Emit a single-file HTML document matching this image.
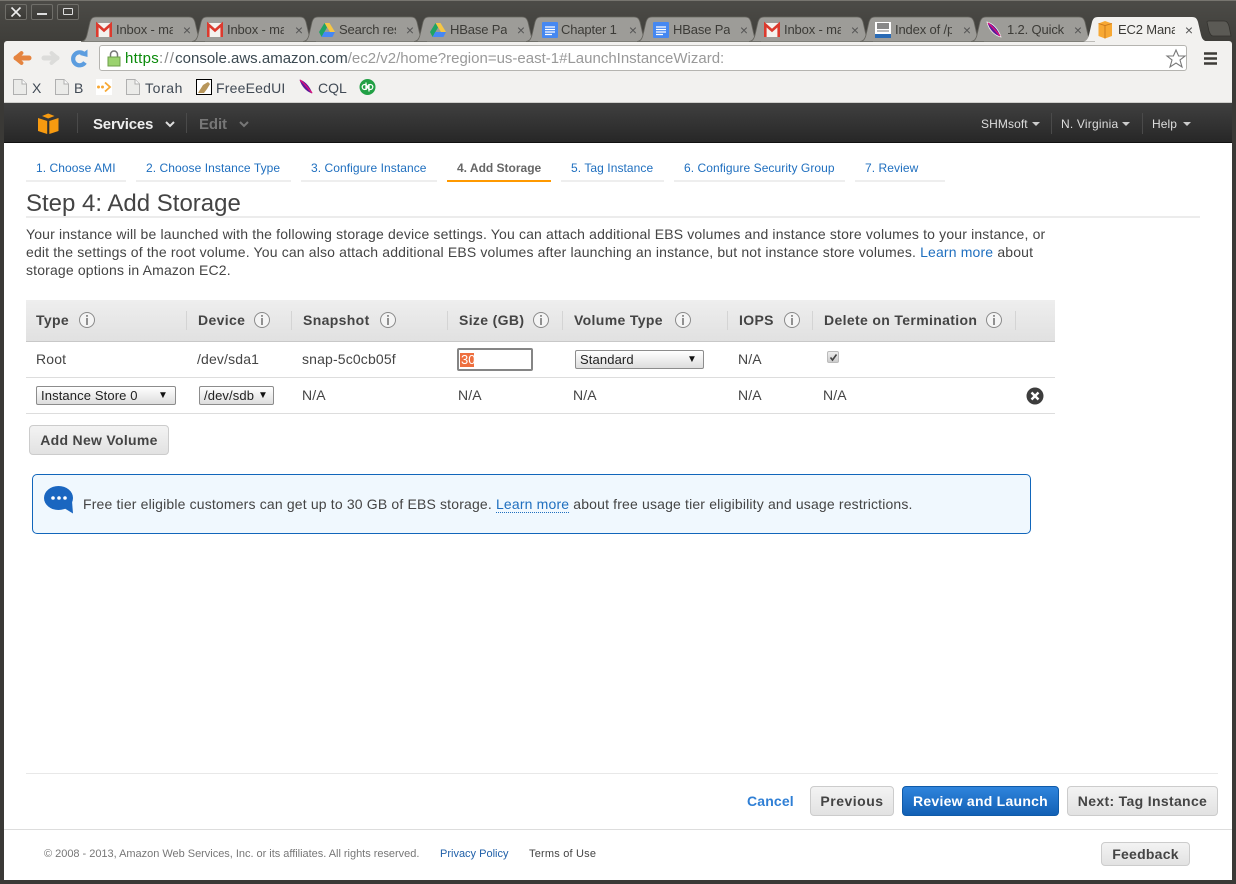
<!DOCTYPE html>
<html><head><meta charset="utf-8"><title>EC2 Management Console</title>
<style>
html,body{margin:0;padding:0}
body{width:1236px;height:884px;position:relative;overflow:hidden;background:#3a3936;font-family:"Liberation Sans",sans-serif;color:#444}
.a{position:absolute;white-space:nowrap}
svg{position:absolute;overflow:visible}
.tt{position:absolute;top:21px;height:18px;line-height:18px;font-size:13px;color:#3c3b37;overflow:hidden;white-space:nowrap;width:57px;letter-spacing:-.15px}
.tc{position:absolute;top:21px;font-size:14px;line-height:18px;color:#555;width:12px;text-align:center}
.wb{position:absolute;top:4px;width:20px;height:14px;border:1px solid #6f6e69;border-radius:2px;background:linear-gradient(#4a4945,#3b3a36);color:#eee;text-align:center;line-height:14px;font-size:13px}
.bm{position:absolute;top:79px;font-size:14px;line-height:18px;color:#414a55;letter-spacing:.3px}
.st{position:absolute;top:145px;height:35px;box-sizing:content-box;border-bottom:2px solid #eee;font-size:12px;line-height:46px;text-align:left;text-indent:10px;color:#1f6fbf;letter-spacing:.07px}
.th{position:absolute;top:311px;font-size:14px;font-weight:bold;line-height:18px;color:#444;letter-spacing:.35px}
.sp{position:absolute;top:311px;width:1px;height:19px;background:#d4d4d4}
.td{position:absolute;font-size:14px;line-height:18px;color:#444;letter-spacing:.15px}
.sel{position:absolute;height:17px;border:1px solid #8c8c8c;border-radius:2px;background:linear-gradient(#fff,#ddd);font-size:13px;line-height:17px;color:#222;padding-left:4px;box-sizing:content-box;letter-spacing:.12px}
.sel i{position:absolute;right:6px;top:0;font-style:normal;font-size:10px;color:#111}
.btn{position:absolute;box-sizing:border-box;border:1px solid #ccc;border-radius:4px;background:linear-gradient(#f3f3f3,#e2e2e2);font-weight:bold;font-size:14px;color:#444;text-align:center;letter-spacing:.3px}
.hd{position:absolute;top:116px;line-height:16px;font-size:12px;color:#ddd;letter-spacing:.1px}
.ft{position:absolute;top:847px;line-height:14px;font-size:11px}
</style></head>
<body>
<svg width="0" height="0"><defs>
<linearGradient id="og" x1="0" y1="0" x2="0" y2="1"><stop offset="0" stop-color="#eda878"/><stop offset="1" stop-color="#dc6426"/></linearGradient>
<symbol id="t" viewBox="0 0 126 26" width="126" height="26" overflow="visible"><path d="M0 24.500C3 24.500 5 22 6 18L9 5C10 2 11 0 15 0H108C112 0 113 2 114 5L117 18C118 22 120 24.500 124 24.500Z" fill="#9d9c98" stroke="#66655f" stroke-width=".8"/></symbol>
<symbol id="page" viewBox="0 0 14 16" width="14" height="16" overflow="visible"><path d="M.5.5H9L13.500 5V15.500H.5Z" fill="#ebebe9" stroke="#b0b0b0"/><path d="M9 .5V5H13.500" fill="#fafafa" stroke="#b0b0b0"/></symbol>
<symbol id="gm" viewBox="0 0 16 14" width="16" height="14" overflow="visible"><rect width="16" height="14" fill="#f4f2ee"/><path d="M1.300 14V1.500L8 7.500L14.700 1.500V14" fill="none" stroke="#dc3a2e" stroke-width="2.600"/></symbol>
<symbol id="dr" viewBox="0 0 16 14" width="16" height="14" overflow="visible"><path d="M5.500 0H10.500L16 9H11Z" fill="#f6c644"/><path d="M5.500 0L0 9L2.600 14L8 4.500Z" fill="#1fa463"/><path d="M2.600 14H13.400L16 9H5.200Z" fill="#4687f4"/></symbol>
<symbol id="dc" viewBox="0 0 16 16" width="16" height="16" overflow="visible"><rect width="16" height="16" rx="1" fill="#4688f1"/><path d="M3 5H13M3 7.500H13M3 10H13M3 12.500H10" stroke="#fff" stroke-width="1.200"/></symbol>
<symbol id="fe" viewBox="0 0 16 16" width="16" height="16" overflow="visible"><path d="M1 0C6 1 12 6 15 15C10 14 3 9 1 0Z" fill="#5a1a9a" stroke="#f4f2ee" stroke-width=".8"/><path d="M2 1C6 4 10 9 14 14" stroke="#e0107a" stroke-width="1.400" fill="none"/></symbol>
<symbol id="ii" viewBox="0 0 18 18" width="18" height="18" overflow="visible"><circle cx="9" cy="9" r="7.500" fill="#f4f4f4" stroke="#8a8a8a" stroke-width="1"/><rect x="8.300" y="4" width="1.400" height="1.800" fill="#666"/><rect x="8.300" y="7" width="1.400" height="7" fill="#666"/></symbol>
</defs></svg>

<!-- window top -->
<div class="a" style="left:0;top:0;width:1236px;height:103px;background:linear-gradient(#4c4b47 0,#3f3e3a 40px,#3a3936 100%);border-top:1px solid #77756f;box-sizing:border-box"></div>
<div class="wb" style="left:5px"><svg style="left:5px;top:2px" width="10" height="10"><path d="M.5.5L9.500 9.500M9.500.5L.5 9.500" stroke="#eee" stroke-width="1.600"/></svg></div>
<div class="wb" style="left:31px"><span style="display:block;width:10px;height:2px;background:#ddd;margin:8px auto 0"></span></div>
<div class="wb" style="left:57px"><span style="display:block;width:8px;height:5px;border:1px solid #ddd;border-radius:1px;margin:3px auto 0"></span></div>

<!-- toolbar -->
<div class="a" style="left:4px;top:41px;width:1228px;height:62px;background:#f2f1ef;border-bottom:1px solid #cfcecb;box-sizing:border-box;border-radius:3px 3px 0 0"></div>

<!-- tabs -->
<svg style="left:0;top:0" width="1236" height="48">
<use href="#t" x="81" y="17"/><use href="#t" x="192" y="17"/><use href="#t" x="303" y="17"/><use href="#t" x="414" y="17"/><use href="#t" x="526" y="17"/><use href="#t" x="637" y="17"/><use href="#t" x="749" y="17"/><use href="#t" x="860" y="17"/><use href="#t" x="971" y="17"/>
<path d="M1083 41.500C1086 41.500 1088 39 1089 35L1092 22C1093 19 1094 17 1098 17H1192C1196 17 1197 19 1198 22L1201 35C1202 39 1204 41.500 1208 41.500Z" fill="#f2f1ef"/>
<path d="M1207 22C1207 21 1208 21 1209 21H1224C1227 21 1228 23 1229 26L1231 36H1213C1211 36 1210 34 1209 31Z" fill="#5b5a55" stroke="#33322e" stroke-width=".8"/>
<use href="#gm" x="96" y="23"/><use href="#gm" x="207" y="23"/>
<use href="#dr" x="319" y="23"/><use href="#dr" x="430" y="23"/>
<use href="#dc" x="542" y="22"/><use href="#dc" x="653" y="22"/>
<use href="#gm" x="764" y="23"/>
<g><rect x="875" y="22" width="16" height="16" fill="#fff"/><rect x="875" y="34" width="16" height="4" fill="#2a6bb5"/><rect x="877" y="23" width="12" height="6" fill="#888"/><rect x="877" y="30" width="12" height="2" fill="#bbb"/></g>
<use href="#fe" x="986" y="22"/>
<path d="M1098.500 23.500L1105 21L1112 23.500V36L1105 38.500L1098.500 36Z" fill="#f7a833"/><path d="M1098.500 23.500L1105 25.500L1112 23.500M1105 25.500V38.500" fill="none" stroke="#c8761a" stroke-width=".9"/>
</svg>
<div class="tt" style="left:116px">Inbox - ma</div><div class="tc" style="left:181px">×</div>
<div class="tt" style="left:227px">Inbox - mai</div><div class="tc" style="left:293px">×</div>
<div class="tt" style="left:339px">Search res</div><div class="tc" style="left:404px">×</div>
<div class="tt" style="left:450px">HBase Pac</div><div class="tc" style="left:515px">×</div>
<div class="tt" style="left:561px">Chapter 1.</div><div class="tc" style="left:627px">×</div>
<div class="tt" style="left:673px">HBase Pac</div><div class="tc" style="left:738px">×</div>
<div class="tt" style="left:784px">Inbox - ma</div><div class="tc" style="left:849px">×</div>
<div class="tt" style="left:895px">Index of /p</div><div class="tc" style="left:961px">×</div>
<div class="tt" style="left:1007px">1.2. Quick</div><div class="tc" style="left:1072px">×</div>
<div class="tt" style="left:1118px">EC2 Manag</div><div class="tc" style="left:1183px">×</div>

<!-- nav -->
<svg style="left:0;top:44px" width="96" height="28">
<path d="M16 14H29" stroke="url(#og)" stroke-width="5" stroke-linecap="round" fill="none"/><path d="M16 14h13" stroke="#e5843f" stroke-width="5" stroke-linecap="round"/>
<path d="M21.500 9L15.500 14L21.500 19" fill="none" stroke="#e5843f" stroke-width="3.800" stroke-linecap="round" stroke-linejoin="round"/>
<path d="M44 14H57" stroke="#dcdcda" stroke-width="5" stroke-linecap="round"/>
<path d="M51.500 9L57.500 14L51.500 19" fill="none" stroke="#dcdcda" stroke-width="3.800" stroke-linecap="round" stroke-linejoin="round"/>
<path d="M84 10A6.500 6.500 0 1 0 85 18.500" fill="none" stroke="#5c9ddf" stroke-width="4.200"/><path d="M80 11L87.500 5.500V13Z" fill="#5c9ddf"/>
</svg>
<div class="a" style="left:99px;top:45px;width:1088px;height:26px;background:#fff;border:1px solid #b5b4b0;border-radius:3px;box-sizing:border-box"></div>
<svg style="left:107px;top:50px" width="14" height="16"><path d="M3.500 7V4.500a3.500 3.500 0 0 1 7 0V7" fill="none" stroke="#777" stroke-width="1.500"/><rect x="1" y="7" width="12" height="9" fill="#9bd26f" stroke="#6e9e48"/></svg>
<div class="a" style="left:125px;top:50px;font-size:15px;line-height:18px;color:#999"><span style="color:#0a8a0a;letter-spacing:.3px">https</span><span style="color:#888;letter-spacing:1.200px">://</span><span style="color:#3c4a52">console.aws.amazon.com</span>/ec2/v2/home?region=us-east-1#LaunchInstanceWizard:</div>
<svg style="left:1166px;top:49px" width="20" height="19"><path d="M10 1L12.600 7H19L14 11L16 18L10 14L4 18L6 11L1 7H7.400Z" fill="#fff" stroke="#777" stroke-width="1.100"/></svg>
<svg style="left:1204px;top:52px" width="13" height="13"><path d="M0 1.500H13M0 6.500H13M0 11.500H13" stroke="#3c3b37" stroke-width="2.400"/></svg>

<!-- bookmarks -->
<svg style="left:0;top:72px" width="400" height="30">
<use href="#page" x="13" y="7"/><use href="#page" x="55" y="7"/>
<rect x="96" y="7" width="16" height="16" fill="#fff"/><circle cx="98.500" cy="15" r="1.500" fill="#f7a833"/><circle cx="102.500" cy="15" r="1.500" fill="#f7a833"/><path d="M105 10.500L110 15L105 19.500" fill="none" stroke="#f7a833" stroke-width="1.800"/>
<use href="#page" x="126" y="7"/>
<rect x="196.500" y="7.500" width="15" height="15" fill="#fff" stroke="#000"/><path d="M198 21L203 13L208 10L210 12L207 17L204 21Z" fill="#b8965a"/>
<use href="#fe" x="298" y="7"/>
<circle cx="367.500" cy="15" r="8" fill="#22a045"/><path d="M366 10.500V18M369 12V19.500" stroke="#fff" stroke-width="1.300"/><circle cx="364.700" cy="15" r="2.500" fill="none" stroke="#fff" stroke-width="1.200"/><circle cx="370.300" cy="15" r="2.500" fill="none" stroke="#fff" stroke-width="1.200"/>
</svg>
<div class="bm" style="left:32px">X</div><div class="bm" style="left:74px">B</div><div class="bm" style="left:145px;letter-spacing:.6px">Torah</div><div class="bm" style="left:216px;letter-spacing:.2px">FreeEedUI</div><div class="bm" style="left:318px;letter-spacing:0">CQL</div>

<!-- aws header -->
<div class="a" style="left:4px;top:103px;width:1228px;height:40px;background:linear-gradient(#404040,#272727);border-bottom:1px solid #111;box-sizing:border-box"></div>
<svg style="left:38px;top:113px" width="21" height="21"><path d="M0 5L9.200 8V21L0 18Z" fill="#f79a10"/><path d="M20.500 5L11.300 8V21L20.500 18Z" fill="#f79a10"/><path d="M4 3L10.200 0.500L16.500 3L10.200 5.500Z" fill="#f79a10"/></svg>
<div class="a" style="left:77px;top:113px;width:1px;height:20px;background:#4a4a4a"></div>
<div class="a" style="left:186px;top:113px;width:1px;height:20px;background:#4a4a4a"></div>
<div class="a" style="left:93px;top:116px;font-size:15px;font-weight:bold;line-height:18px;color:#eee;letter-spacing:-.2px">Services</div>
<svg style="left:165px;top:121px" width="10" height="7"><path d="M1 1L5 5L9 1" fill="none" stroke="#ddd" stroke-width="2"/></svg>
<div class="a" style="left:199px;top:116px;font-size:15px;font-weight:bold;line-height:18px;color:#777;letter-spacing:-.1px">Edit</div>
<svg style="left:239px;top:121px" width="10" height="7"><path d="M1 1L5 5L9 1" fill="none" stroke="#777" stroke-width="2"/></svg>
<div class="hd" style="left:981px">SHMsoft</div><svg style="left:1032px;top:122px" width="8" height="5"><path d="M0 0H8L4 4Z" fill="#ccc"/></svg>
<div class="a" style="left:1051px;top:113px;width:1px;height:21px;background:#4a4a4a"></div>
<div class="hd" style="left:1061px;letter-spacing:.2px">N. Virginia</div><svg style="left:1122px;top:122px" width="8" height="5"><path d="M0 0H8L4 4Z" fill="#ccc"/></svg>
<div class="a" style="left:1142px;top:113px;width:1px;height:21px;background:#4a4a4a"></div>
<div class="hd" style="left:1152px">Help</div><svg style="left:1183px;top:122px" width="8" height="5"><path d="M0 0H8L4 4Z" fill="#ccc"/></svg>

<!-- page -->
<div class="a" style="left:4px;top:143px;width:1228px;height:737px;background:#fff"></div>
<div class="st" style="left:26px;width:100px">1. Choose AMI</div>
<div class="st" style="left:136px;width:155px">2. Choose Instance Type</div>
<div class="st" style="left:301px;width:136px">3. Configure Instance</div>
<div class="st" style="left:447px;width:104px;font-weight:bold;color:#666;border-bottom-color:#f90;letter-spacing:0">4. Add Storage</div>
<div class="st" style="left:561px;width:103px">5. Tag Instance</div>
<div class="st" style="left:674px;width:171px">6. Configure Security Group</div>
<div class="st" style="left:855px;width:90px">7. Review</div>

<div class="a" style="left:26px;top:190px;font-size:24px;line-height:28px;color:#444">Step 4: Add Storage</div>
<div class="a" style="left:26px;top:216px;width:1174px;height:2px;background:#ececec"></div>
<div class="a" style="left:26px;top:225px;font-size:14px;line-height:18px;color:#444;letter-spacing:.158px">Your instance will be launched with the following storage device settings. You can attach additional EBS volumes and instance store volumes to your instance, or<br>edit the settings of the root volume. You can also attach additional EBS volumes after launching an instance, but not instance store volumes. <span style="color:#1f6fbf">Learn more</span> about<br>storage options in Amazon EC2.</div>

<!-- table -->
<div class="a" style="left:26px;top:300px;width:1029px;height:42px;background:linear-gradient(#eee,#e1e1e1);border-bottom:1px solid #c8c8c8;box-sizing:border-box"></div>
<div class="a" style="left:26px;top:377px;width:1029px;height:1px;background:#ddd"></div>
<div class="a" style="left:26px;top:413px;width:1029px;height:1px;background:#ddd"></div>
<div class="sp" style="left:186px"></div><div class="sp" style="left:291px"></div><div class="sp" style="left:447px"></div><div class="sp" style="left:562px"></div><div class="sp" style="left:727px"></div><div class="sp" style="left:812px"></div><div class="sp" style="left:1015px"></div>
<div class="th" style="left:36px">Type</div><div class="th" style="left:198px">Device</div><div class="th" style="left:303px">Snapshot</div><div class="th" style="left:459px">Size (GB)</div><div class="th" style="left:574px">Volume Type</div><div class="th" style="left:739px">IOPS</div><div class="th" style="left:824px">Delete on Termination</div>
<svg style="left:0;top:311px" width="1060" height="18">
<use href="#ii" x="78" y="0"/><use href="#ii" x="253" y="0"/><use href="#ii" x="379" y="0"/><use href="#ii" x="532" y="0"/><use href="#ii" x="674" y="0"/><use href="#ii" x="783" y="0"/><use href="#ii" x="985" y="0"/>
</svg>
<div class="td" style="left:36px;top:350px">Root</div>
<div class="td" style="left:197px;top:350px">/dev/sda1</div>
<div class="td" style="left:302px;top:350px">snap-5c0cb05f</div>
<div class="a" style="left:457px;top:348px;width:76px;height:23px;box-sizing:border-box;border:2px solid #858585;border-radius:2px;background:#fff"><span class="a" style="left:1px;top:3px;height:14px;line-height:14px;padding:0 0 0 1px;width:13px;background:#ee6f3f;color:#fff;font-size:13px">30</span></div>
<div class="sel" style="left:575px;top:350px;width:123px">Standard<i>▼</i></div>
<div class="td" style="left:738px;top:350px">N/A</div>
<div class="a" style="left:827px;top:351px;width:12px;height:12px;box-sizing:border-box;border:1px solid #bbb;border-radius:2px;background:linear-gradient(#eee,#ccc)"><svg style="left:1px;top:1px" width="9" height="9"><path d="M1.500 4.500L3.500 7L7.500 1.500" fill="none" stroke="#444" stroke-width="1.600"/></svg></div>
<div class="sel" style="left:36px;top:386px;width:134px">Instance Store 0<i style="right:7px">▼</i></div>
<div class="sel" style="left:199px;top:386px;width:69px">/dev/sdb<i style="right:5px">▼</i></div>
<div class="td" style="left:302px;top:386px">N/A</div><div class="td" style="left:458px;top:386px">N/A</div><div class="td" style="left:573px;top:386px">N/A</div><div class="td" style="left:738px;top:386px">N/A</div><div class="td" style="left:823px;top:386px">N/A</div>
<svg style="left:1026px;top:387px" width="18" height="18"><circle cx="9" cy="9" r="8.500" fill="#3d3d3d"/><path d="M5.500 5.500L12.500 12.500M12.500 5.500L5.500 12.500" stroke="#fff" stroke-width="2.400"/></svg>
<div class="btn" style="left:29px;top:425px;width:140px;height:30px;line-height:28px">Add New Volume</div>

<!-- info -->
<div class="a" style="left:32px;top:474px;width:999px;height:60px;box-sizing:border-box;background:#f0f8fe;border:1px solid #1166bb;border-radius:5px"></div>
<svg style="left:44px;top:486px" width="30" height="28"><ellipse cx="14.500" cy="12" rx="14.500" ry="12" fill="#1a66c0"/><path d="M20 22L29 27.500L28 15Z" fill="#1a66c0"/><circle cx="9" cy="12" r="1.800" fill="#fff"/><circle cx="15" cy="12" r="1.800" fill="#fff"/><circle cx="21" cy="12" r="1.800" fill="#fff"/></svg>
<div class="a" style="left:83px;top:495px;font-size:14px;line-height:18px;color:#444;letter-spacing:.164px">Free tier eligible customers can get up to 30 GB of EBS storage. <span style="color:#1f6fbf;border-bottom:1px dotted #1f6fbf">Learn more</span> about free usage tier eligibility and usage restrictions.</div>

<!-- bottom -->
<div class="a" style="left:26px;top:773px;width:1192px;height:1px;background:#e8e8e8"></div>
<div class="a" style="left:747px;top:792px;font-size:14px;font-weight:bold;line-height:18px;color:#2f7fd5;letter-spacing:.15px">Cancel</div>
<div class="btn" style="left:810px;top:786px;width:84px;height:30px;line-height:28px;letter-spacing:.5px">Previous</div>
<div class="btn" style="left:902px;top:786px;width:157px;height:30px;line-height:28px;background:linear-gradient(#2f84dc,#1260b5);border-color:#0f5aa8;color:#fff;letter-spacing:.25px">Review and Launch</div>
<div class="btn" style="left:1067px;top:786px;width:151px;height:30px;line-height:28px;letter-spacing:.33px">Next: Tag Instance</div>
<div class="a" style="left:4px;top:829px;width:1228px;height:1px;background:#ddd"></div>
<div class="ft" style="left:44px;color:#777;letter-spacing:-.02px">© 2008 - 2013, Amazon Web Services, Inc. or its affiliates. All rights reserved.</div>
<div class="ft" style="left:440px;color:#1f5fa8">Privacy Policy</div>
<div class="ft" style="left:529px;color:#444;letter-spacing:.2px">Terms of Use</div>
<div class="btn" style="left:1101px;top:842px;width:89px;height:24px;line-height:22px;letter-spacing:.25px">Feedback</div>
</body></html>
